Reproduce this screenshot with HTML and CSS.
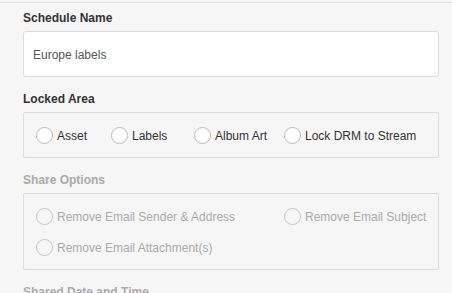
FILE: index.html
```html
<!DOCTYPE html>
<html>
<head>
<meta charset="utf-8">
<link rel="stylesheet" href="styles.css">
</head>
<body>
<div class="page">
  <form class="form">
    <div class="label">Schedule Name</div>
    <div class="input">Europe labels</div>

    <div class="label">Locked Area</div>
    <div class="box grid-locked">
      <label class="radio"><span class="dot"></span>Asset</label>
      <label class="radio"><span class="dot"></span>Labels</label>
      <label class="radio"><span class="dot"></span>Album Art</label>
      <label class="radio"><span class="dot"></span>Lock DRM to Stream</label>
    </div>

    <div class="label disabled">Share Options</div>
    <div class="box grid-share disabled">
      <label class="radio"><span class="dot"></span>Remove Email Sender &amp; Address</label>
      <label class="radio"><span class="dot"></span>Remove Email Subject</label>
      <label class="radio"><span class="dot"></span>Remove Email Attachment(s)</label>
    </div>

    <div class="label disabled">Shared Date and Time</div>
  </form>
</div>
</body>
</html>
```
FILE: styles.css
```css
html, body {
  margin: 0;
  padding: 0;
  background: #f6f6f6;
  overflow: hidden;
}
body {
  font-family: "Liberation Sans", Arial, sans-serif;
  font-size: 12px;
  color: #333;
}
.page {
  margin-top: 2px;
  border-top: 1px solid #e2e2e2;
  padding: 7px 13px 0 23px;
}
.form {
  display: flex;
  flex-direction: column;
}
.label {
  font-weight: bold;
  line-height: 16px;
  height: 14px;
  margin-bottom: 7px;
  color: #333;
}
.label:not(:first-child) {
  margin-top: 14px;
}
.label.disabled {
  color: #aaa;
}
.input {
  height: 44px;
  box-sizing: content-box;
  border: 1px solid #dcdcdc;
  border-radius: 3px;
  background: #fff;
  padding: 0 9px;
  line-height: 46px;
  overflow: hidden;
  color: #555;
}
.box {
  border: 1px solid #dcdcdc;
  border-radius: 2px;
  padding: 13px 12px;
  display: grid;
  row-gap: 13px;
}
.grid-locked {
  grid-template-columns: 75px 83px 90px auto;
}
.grid-share {
  grid-template-columns: 248px auto;
}
.radio {
  display: flex;
  align-items: center;
  height: 18px;
  padding-top: 1px;
  box-sizing: border-box;
  white-space: nowrap;
  color: #333;
}
.dot {
  width: 15px;
  height: 15px;
  border: 1px solid #b9b9b9;
  border-radius: 50%;
  background: #fff;
  margin-right: 4px;
  flex: none;
}
.disabled .radio {
  color: #aaa;
}
.disabled .dot {
  background: #f6f6f6;
  border-color: #c6c6c6;
}
```
